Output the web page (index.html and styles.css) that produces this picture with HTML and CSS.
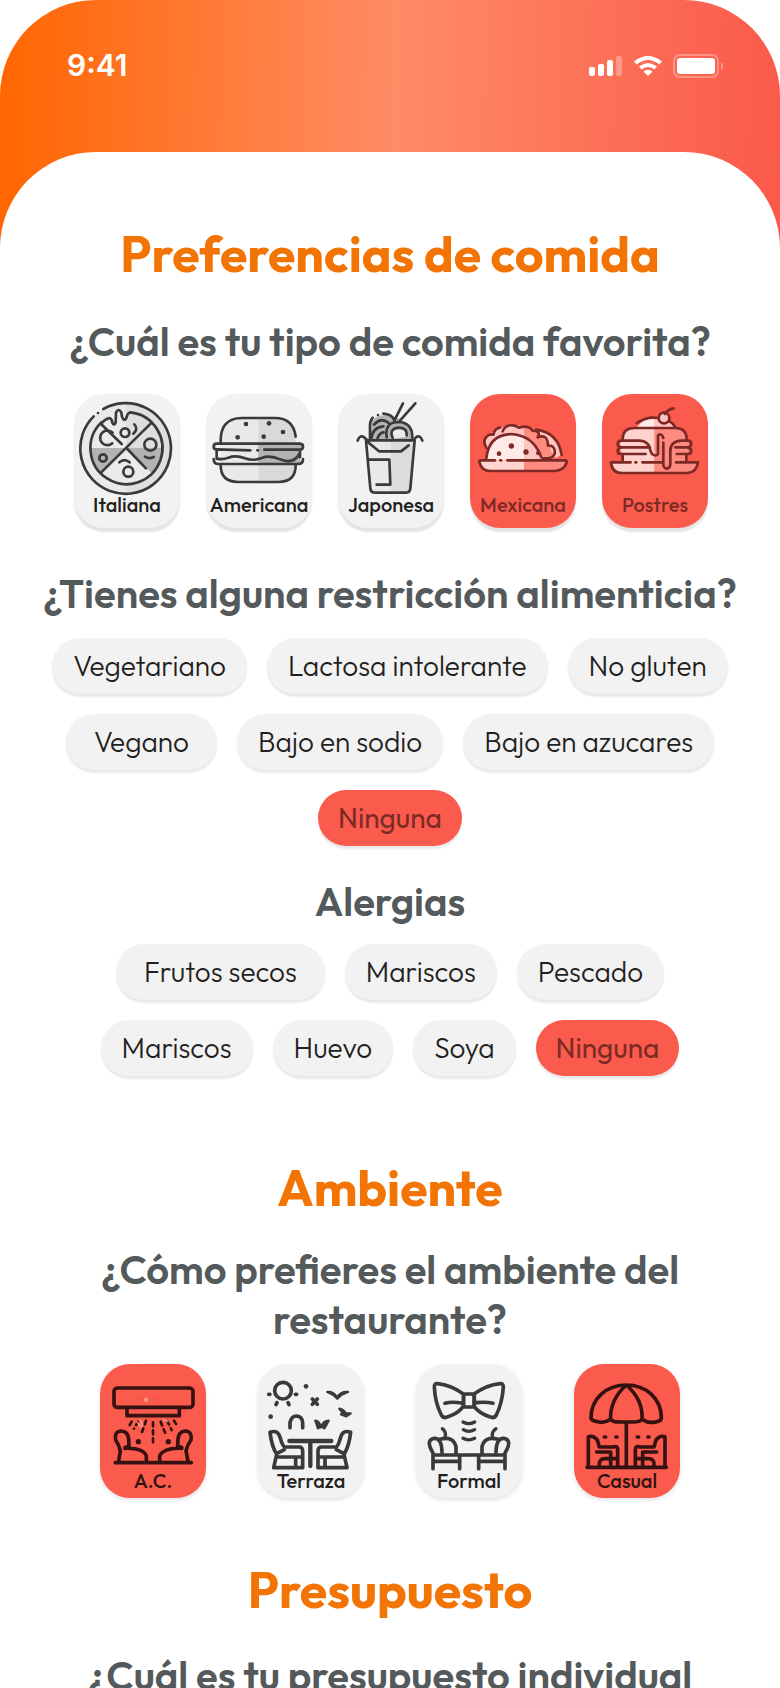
FILE: index.html
```html
<!DOCTYPE html>
<html lang="es">
<head>
<meta charset="utf-8">
<meta name="viewport" content="width=device-width, initial-scale=1">
<title>Preferencias</title>
<link rel="stylesheet" href="styles.css">
</head>
<body>
<div class="screen">
  <header class="status">
    <span class="time">9:41</span>
    <div class="indicators">
      <svg class="signal" viewBox="0 0 34 20" aria-hidden="true"><rect x="0" y="11" width="6" height="9" rx="2"/><rect x="9" y="8" width="6" height="12" rx="2"/><rect x="18" y="4" width="6" height="16" rx="2"/><rect x="27" y="0" width="6" height="20" rx="2" opacity=".3"/></svg>
      <svg class="wifi" viewBox="0 0 28 20" aria-hidden="true"><path d="M0 5.500Q14-5.500 28 5.500L25.300 8.500Q14-.7 2.700 8.500ZM5 10.500Q14 3.500 23 10.500L20.300 13.500Q14 8.700 7.700 13.500ZM9.500 15.500Q14 12 18.500 15.500L14 20Z"/></svg>
      <svg class="battery" viewBox="0 0 50 24" aria-hidden="true"><rect x="1" y="1" width="44" height="22" rx="6" fill="none" stroke="#fff" stroke-width="2" opacity=".3"/><rect x="4" y="4" width="38" height="16" rx="3"/><path d="M48 8q2 1 2 4t-2 4z" opacity=".4"/></svg>
    </div>
  </header>

  <main class="sheet">
    <section class="section spaced">
      <h1 class="title lead">Preferencias de comida</h1>

      <h2 class="question loose">¿Cuál es tu tipo de comida favorita?</h2>
      <div class="cards cards-food">
        <button type="button" class="card" aria-pressed="false">
          <svg class="art" viewBox="42 42 318 306" aria-hidden="true">
            <circle cx="199" cy="204" r="136" fill="#e9e9e9" stroke="none"/><path d="M199 68a136 136 0 0 1 0 272z" fill="#dfdfdf" stroke="none"/>
            <circle cx="199" cy="204" r="108" fill="#ebebeb" stroke="none"/><path d="M199 96a108 108 0 0 1 108 108h-108z" fill="#dedede" stroke="none"/>
            <path d="M91 204H199L123 280A108 108 0 0 1 91 204ZM307 204H199L275 280A108 108 0 0 0 307 204Z" fill="#b3b3b3" stroke="none"/>
            <path d="M130 87A136 136 0 1 1 101 109M114 99h.1M123 132L185 192M275 128L123 278M199 204L258 265"/>
            <path d="M124 130Q135 117 148 114Q156 116 157 128Q162 139 167 128L168 98Q176 82 184 98L186 110Q192 127 199 114Q202 100 211 97A108 108 0 1 1 124 127"/>
            <path d="M158 158A22 22 0 1 0 157 190M223 133Q236 147 220 161M255 230Q268 238 281 231M178 247Q193 234 209 247"/>
            <circle cx="195" cy="158" r="13"/><circle cx="271" cy="194" r="18"/><circle cx="129" cy="234" r="11"/><circle cx="205" cy="275" r="15"/>
          </svg>
          <span class="name">Italiana</span>
        </button>
        <button type="button" class="card" aria-pressed="false">
          <svg class="art" viewBox="438 42 318 306" aria-hidden="true">
            <path d="M482 190V170Q490 115 540 114H595V306H530Q486 303 482 250Z" fill="#e9e9e9" stroke="none"/>
            <path d="M595 114H650Q702 120 707 170V250Q700 303 655 306H595Z" fill="#d9d9d9" stroke="none"/>
            <path d="M595 190H720Q732 200 720 210V240Q728 248 710 252H595Z" fill="#b3b3b3" stroke="none"/>
            <path d="M482 187Q480 114 545 114H645Q700 114 707 170M482 256Q482 306 535 306H655Q707 306 707 256"/>
            <path d="M470 191H720Q729 192 729 200Q729 208 720 209H613M592 211h2M571 211L470 208Q461 208 461 200Q461 191 470 191M470 211V232M720 211V232"/>
            <path d="M470 236Q490 240 505 233Q528 224 555 235Q580 244 605 234Q630 224 660 238Q700 254 718 222M461 237Q461 252 475 252H715Q729 252 729 237"/>
            <g class="dots"><circle cx="558" cy="132" r="7"/><circle cx="627" cy="130" r="7"/><circle cx="669" cy="156" r="7"/><circle cx="533" cy="172" r="7"/><circle cx="611" cy="170" r="7"/></g>
          </svg>
          <span class="name">Americana</span>
        </button>
        <button type="button" class="card" aria-pressed="false">
          <svg class="art" viewBox="54 42 318 306" aria-hidden="true">
            <path d="M150 180V130Q170 95 222 110Q275 125 275 180Z" fill="#b3b3b3" stroke="none"/>
            <path d="M138 181H212V338H165Q151 337 150 325Z" fill="#e9e9e9" stroke="none"/><path d="M212 181H284L272 325Q270 338 255 338H212Z" fill="#dcdcdc" stroke="none"/>
            <path d="M249 70L223 122M286 70L240 122M150 176V148Q148 124 158 113M174 105h.1M190 101Q215 103 222 118"/>
            <path d="M162 134Q182 111 205 128M154 175Q158 142 190 139M172 176Q178 158 191 157M200 172Q193 126 236 126Q278 128 277 174"/>
            <path d="M214 177Q206 147 235 143Q265 143 260 170Z" fill="#ebebeb" stroke="none"/><path d="M218 174Q206 147 235 143Q262 143 260 166"/>
            <path d="M113 182Q118 166 130 170L142 181H280L290 170Q302 166 307 182M138 182L151 325Q152 338 166 338H256Q270 338 271 325L284 182M144 187L177 214H243L266 196M148 239H208L211 314H170"/>
          </svg>
          <span class="name">Japonesa</span>
        </button>
        <button type="button" class="card selected" aria-pressed="true">
          <svg class="art" viewBox="450 42 318 306" aria-hidden="true">
            <path d="M495 205Q490 165 520 155Q570 125 615 140V205Z" fill="#ffc5c0" stroke="none"/><path d="M612 140Q675 145 700 200V238H612Z" fill="#ff8a80" stroke="none"/><path d="M650 150Q720 160 726 225L705 235L680 185Z" fill="#ffc5c0" stroke="none"/>
            <path d="M499 240Q505 166 570 162H612V240Z" fill="#ffeae8" stroke="none"/><path d="M612 167Q645 184 670 240H612Z" fill="#ffc5c0" stroke="none"/>
            <path d="M478 241H612V273H510Q482 270 478 241Z" fill="#ffd5d2" stroke="none"/><path d="M612 241H740Q735 270 710 273H612Z" fill="#ff8a80" stroke="none"/>
            <path d="M499 235Q506 164 574 162Q640 166 664 232M525 241H482Q477 242 478 246Q484 273 512 273H706Q735 270 740 246Q741 241 736 241H562M541 241h2"/>
            <path d="M499 203Q487 184 499 171Q507 161 520 164Q524 145 540 143M548 154Q555 134 578 136Q590 137 597 143Q625 134 638 152Q664 152 653 172Q683 160 684 197Q707 196 704 221Q698 237 670 235M648 149Q715 158 725 225"/>
            <g class="dots"><circle cx="574" cy="198" r="8"/><circle cx="537" cy="221" r="7"/><circle cx="618" cy="216" r="8"/><circle cx="655" cy="219" r="7"/></g>
          </svg>
          <span class="name">Mexicana</span>
        </button>
        <button type="button" class="card selected" aria-pressed="true">
          <svg class="art" viewBox="126 42 318 306" aria-hidden="true">
            <path d="M230 142Q250 115 284 115V142Z" fill="#ffeae8" stroke="none"/><path d="M284 113Q330 116 347 142H284Z" fill="#ffc5c0" stroke="none"/>
            <path d="M188 246V222L174 200L188 180Q190 144 220 144H284V280H180Q153 275 153 247Z" fill="#ffd2ce" stroke="none"/><path d="M284 144H350Q380 150 380 180L393 200L380 222V247H414Q408 279 385 279H284Z" fill="#ff8a80" stroke="none"/>
            <path d="M230 129Q262 108 294 114M320 119Q340 130 347 143M188 178Q188 144 222 144H346Q380 144 380 178"/>
            <circle cx="312" cy="114" r="16" fill="#ffc5c0"/><path d="M315 102Q322 88 341 85"/>
            <path d="M310 174Q305 158 294 166V222Q287 231 276 222Q270 213 269 202Q262 184 240 182H182Q173 183 173 192Q174 201 184 202H270M184 202Q173 204 173 214Q174 222 182 222H257M310 188V255Q312 266 321 266Q331 264 331 253V214Q330 184 365 182H386Q394 184 394 192Q393 201 382 202H346M382 202Q394 204 394 214Q393 222 384 222H350M188 228V242M379 226V242"/>
            <path d="M212 247H153Q156 279 185 279H382Q410 277 414 247H348M247 247H307M226 247h3"/>
          </svg>
          <span class="name">Postres</span>
        </button>
      </div>

      <h2 class="question">¿Tienes alguna restricción alimenticia?</h2>
      <div class="chips">
        <button type="button" class="chip" aria-pressed="false">Vegetariano</button>
        <button type="button" class="chip" aria-pressed="false">Lactosa intolerante</button>
        <button type="button" class="chip" aria-pressed="false">No gluten</button>
        <button type="button" class="chip roomy" aria-pressed="false">Vegano</button>
        <button type="button" class="chip" aria-pressed="false">Bajo en sodio</button>
        <button type="button" class="chip" aria-pressed="false">Bajo en azucares</button>
        <button type="button" class="chip selected" aria-pressed="true">Ninguna</button>
      </div>

      <h2 class="question tight">Alergias</h2>
      <div class="chips inset">
        <button type="button" class="chip roomy" aria-pressed="false">Frutos secos</button>
        <button type="button" class="chip" aria-pressed="false">Mariscos</button>
        <button type="button" class="chip" aria-pressed="false">Pescado</button>
        <button type="button" class="chip" aria-pressed="false">Mariscos</button>
        <button type="button" class="chip" aria-pressed="false">Huevo</button>
        <button type="button" class="chip" aria-pressed="false">Soya</button>
        <button type="button" class="chip selected" aria-pressed="true">Ninguna</button>
      </div>
    </section>

    <section class="section">
      <h1 class="title snug">Ambiente</h1>
      <h2 class="question">¿Cómo prefieres el ambiente del restaurante?</h2>
      <div class="cards cards-mood">
        <button type="button" class="card selected" aria-pressed="true">
          <svg class="art" viewBox="30 42 318 324" aria-hidden="true">
            <rect x="72" y="114" width="237" height="58" rx="10"/><path d="M111 176V197H268V176"/>
            <g stroke="#e8584c" stroke-width="5"><circle cx="126" cy="149" r="2"/><circle cx="147" cy="149" r="3"/><circle cx="168" cy="149" r="4" stroke="#ff9a8f"/><circle cx="189" cy="149" r="3"/><circle cx="211" cy="149" r="3"/></g>
            <g stroke-width="8"><path d="M125 215L115 232M144 215L132 236M168 212L154 252M189 217V282M212 215L226 250M232 213L245 240M252 212L264 232" stroke-dasharray="12 12"/></g>
            <path d="M140 215L155 232M150 210L158 226M220 208L234 214" stroke="#ffa89e" stroke-width="4"/>
            <path d="M76 338H304M86 334L91 302Q86 283 77 270Q72 245 93 243Q114 244 116 267L117 290Q103 291 105 295Q160 293 169 318V334M294 334L288 302Q293 283 303 270Q307 245 286 243Q266 244 264 267L263 290Q278 291 275 295Q220 293 209 318V334"/>
            <g class="dots"><circle cx="145" cy="275" r="8"/><circle cx="235" cy="275" r="8"/></g>
          </svg>
          <span class="name">A.C.</span>
        </button>
        <button type="button" class="card" aria-pressed="false">
          <svg class="art" viewBox="504 42 318 324" aria-hidden="true">
            <circle cx="579" cy="122" r="25"/>
            <path d="M536 133h4M616 133h4M561 158L558 164M594 158L597 164M667 147L682 163M682 147L667 163M600 233V218Q604 198 620 198Q637 200 638 218V233"/>
            <path d="M712 126Q730 124 741 142Q753 124 774 126L755 134L742 146L729 134ZM676 212Q688 213 693 232Q700 212 716 212L703 235L694 228L684 235ZM748 176Q761 179 767 190L782 190L769 199L753 193L757 187Z" stroke-width="7" fill="#3a3a3a"/>
            <g class="dots"><circle cx="648" cy="109" r="7"/><circle cx="542" cy="200" r="7"/></g>
            <path d="M598 273H724M661 276V348" stroke-width="13"/>
            <path d="M540 247Q564 238 570 262Q578 291 585 291H630Q638 293 638 303V353H551L560 313Q545 290 540 247ZM561 321H636M583 299L560 311M617 322V350M782 247Q758 238 752 262Q744 291 738 291H692Q684 293 684 303V353H771L762 313Q777 290 782 247ZM761 321H686M739 299L762 311M705 322V350" stroke-width="11"/>
          </svg>
          <span class="name">Terraza</span>
        </button>
        <button type="button" class="card" aria-pressed="false">
          <svg class="art" viewBox="48 42 318 324" aria-hidden="true">
            <g stroke-width="11"><path d="M190 132Q153 105 112 101Q103 100 103 111Q105 158 124 195Q131 207 144 200Q175 191 190 169ZM222 132Q260 105 300 101Q310 100 310 111Q307 158 289 195Q282 207 269 200Q239 191 222 169ZM191 132H223V171H191ZM135 160Q155 154 185 159M229 158Q260 155 279 160"/></g>
            <path d="M189 216Q206 226 224 216M190 239Q206 249 224 239M189 265Q206 274 224 265M127 236Q140 246 135 262M288 236Q273 246 278 262" stroke-width="10"/>
            <path d="M99 356V309Q75 269 103 265Q125 264 126 307M120 268Q160 257 168 290V310M179 356V315H102M102 334H178M315 356V309Q339 269 311 265Q289 264 288 307M294 268Q254 257 246 290V310M236 356V315H312M312 334H237M179 315H236" stroke-width="11"/>
          </svg>
          <span class="name">Formal</span>
        </button>
        <button type="button" class="card selected" aria-pressed="true">
          <svg class="art" viewBox="522 42 318 324" aria-hidden="true">
            <path d="M632 208Q612 222 588 214Q574 212 573 204C573 145 620 105 679 105S784 145 784 204Q784 213 770 215Q748 222 726 208Q719 216 700 216H658Q638 216 632 208Q629 150 679 105Q730 150 726 208M679 218V350M561 352H799"/>
            <path d="M565 348V260Q580 255 592 270L598 291H640Q653 286 653 299V346M590 306H632V344M598 346Q596 326 615 326H650M795 348V260Q780 255 768 270L762 291H720Q706 286 706 299V346M770 306H728V344M762 346Q764 326 745 326H710"/>
            <path d="M613 261h4M648 261h3M712 261h4M744 261h3"/>
          </svg>
          <span class="name">Casual</span>
        </button>
      </div>
    </section>

    <section class="section">
      <h1 class="title">Presupuesto</h1>
      <h2 class="question">¿Cuál es tu presupuesto individual</h2>
    </section>
  </main>
</div>
</body>
</html>
```
FILE: styles.css
```css
* { box-sizing: border-box; }

body {
  margin: 0;
  background: #fff;
  color: #231f20;
  font-family: Outfit, Lato, sans-serif;
}

.screen {
  height: 100vh;
  overflow: hidden;
  border-radius: 96px 96px 0 0;
  background: linear-gradient(91deg, #ff6600 0%, #ff8c66 49%, #fa584a 98%);
}

.status {
  display: flex;
  justify-content: space-between;
  align-items: flex-start;
  height: 152px;
  padding: 47px 57px 0 67px;
  color: #fff;
}

.time {
  font: 600 30px/36px Inter, sans-serif;
}

.indicators {
  display: flex;
  align-items: center;
  gap: 11px;
  height: 38px;
}

.indicators svg { fill: #fff; }
.signal { width: 34px; height: 20px; }
.wifi { width: 28px; height: 20px; }
.battery { width: 50px; height: 24px; }

.sheet {
  min-height: 100%;
  padding: 70px 32px;
  border-radius: 96px 96px 0 0;
  background: #fff;
}

.section {
  margin-bottom: 60px;
  text-align: center;
}

.section.spaced { margin-bottom: 80px; }

.title {
  margin: 0 0 28px;
  color: #f27405;
  font-size: 50px;
  font-weight: 700;
  line-height: 64px;
}

.title.lead { margin-bottom: 30px; }
.title.snug { margin-bottom: 24px; }

.question {
  margin: 0 0 20px;
  color: #54595b;
  font-size: 40px;
  font-weight: 600;
  line-height: 50px;
}

.question.loose { margin-bottom: 28px; }
.question.tight { margin-bottom: 18px; }

.cards {
  display: flex;
  justify-content: center;
}

.cards-food {
  gap: 26px;
  margin-bottom: 40px;
  padding-left: 2px;
}

.cards-mood { gap: 52px; }

.card {
  display: flex;
  flex-direction: column;
  align-items: center;
  width: 106px;
  height: 134px;
  padding: 0;
  border: 0;
  border-radius: 30px;
  background: #f2f2f2;
  box-shadow: 0 4px 2px rgba(0, 0, 0, .11);
  color: #231f20;
  font: inherit;
}

.cards-mood .card { box-shadow: 0 2px 4px rgba(0, 0, 0, .12); }

.card.selected,
.chip.selected {
  background: #fb5b4c;
  color: #7d2a26;
}

.cards-mood .selected { color: #2e1312; }

.art {
  flex: none;
  width: 106px;
  fill: none;
  stroke: #3a3a3a;
  stroke-width: 8;
  stroke-linecap: round;
  stroke-linejoin: round;
}

.cards-food .art { height: 102px; }
.cards-mood .art { height: 108px; stroke-width: 11; }
.selected .art { stroke: #7d2a26; }
.cards-mood .selected .art { stroke: #351211; }
.dots { fill: #3a3a3a; stroke: none; }
.selected .dots { fill: #7d2a26; }
.cards-mood .selected .dots { fill: #351211; }

.name {
  font-size: 20px;
  font-weight: 500;
  line-height: 18px;
}

.chips {
  display: flex;
  flex-wrap: wrap;
  justify-content: center;
  gap: 20px;
  margin-bottom: 30px;
}

.chips.inset { padding: 0 48px; }

.chip {
  height: 56px;
  padding: 0 21px;
  border: 0;
  border-radius: 28px;
  background: #f2f2f2;
  box-shadow: 0 3px 2px rgba(0, 0, 0, .09);
  color: #231f20;
  font: 300 28px/36px Outfit, Lato, sans-serif;
}

.chip.selected {
  padding: 0 20px;
  font-weight: 400;
}

.chip.roomy { padding: 0 28px; }
```
